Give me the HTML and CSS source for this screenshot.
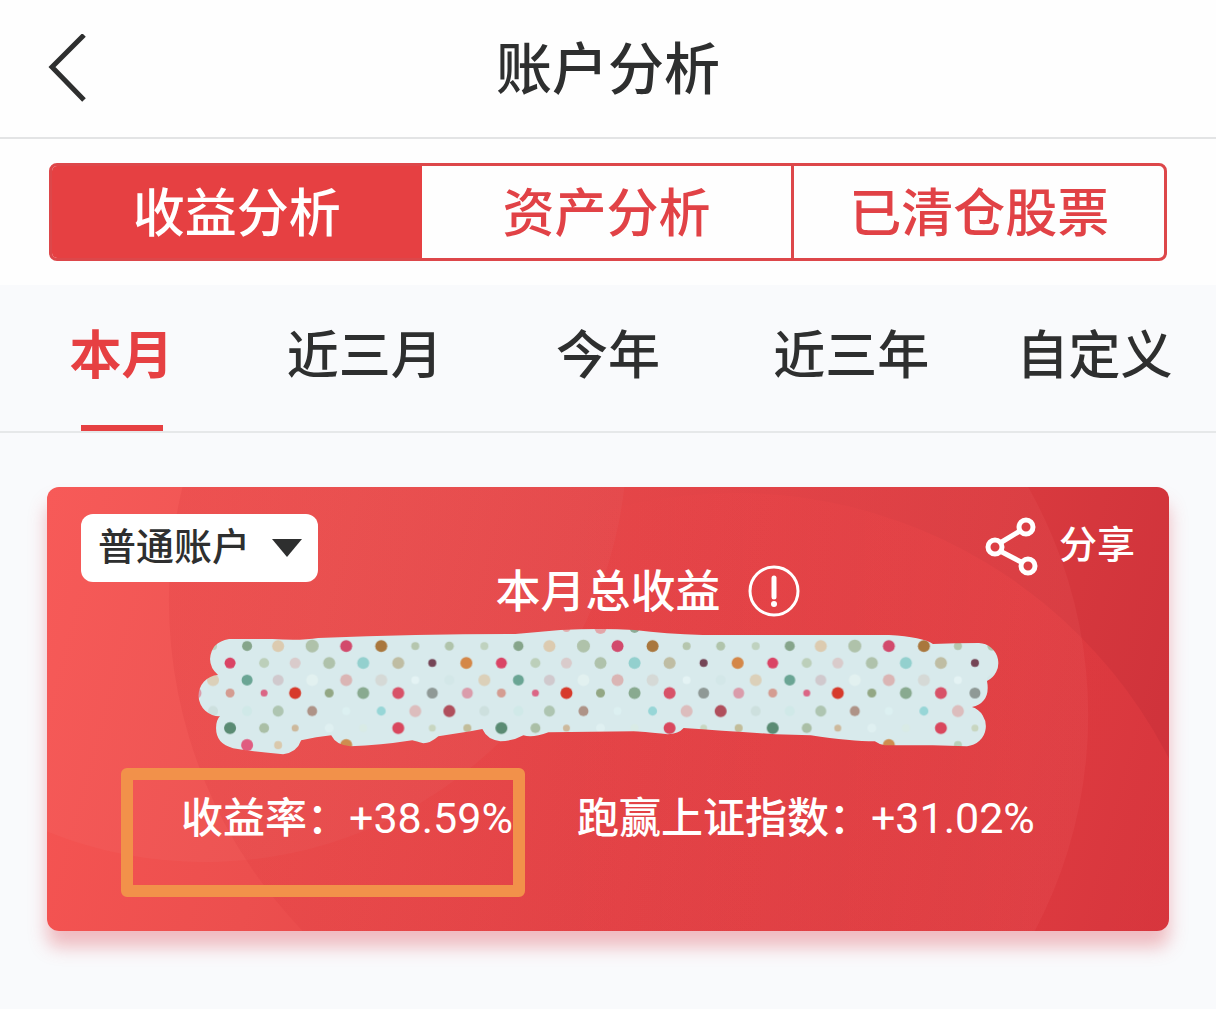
FILE: index.html
```html
<!DOCTYPE html>
<html lang="zh-CN">

<head>
  <meta charset="UTF-8">
  <meta name="viewport" content="width=device-width, initial-scale=1">
  <title>账户分析</title>
  <link rel="stylesheet" href="styles.css">
</head>

<body>

  <header class="top-bar">
    <button class="back-button" aria-label="返回">
      <svg width="40" height="70" viewBox="0 0 40 70"><path d="M36 1 L4 33 L36 66" /></svg>
    </button>
    <h1>账户分析</h1>
  </header>

  <div class="segment-wrap">
    <div class="segment">
      <button class="active">收益分析</button>
      <button>资产分析</button>
      <button>已清仓股票</button>
    </div>
  </div>

  <nav class="period-tabs">
    <button class="active">本月</button>
    <button>近三月</button>
    <button>今年</button>
    <button>近三年</button>
    <button>自定义</button>
  </nav>

  <main>
    <section class="card">
      <!-- soft circles behind the content -->
      <svg class="card-bg" viewBox="0 0 1122 444" preserveAspectRatio="xMidYMid slice">
        <defs>
          <linearGradient id="fade-dark">
            <stop offset="0" stop-color="#c81e28" stop-opacity="0.12" />
            <stop offset="0.5" stop-color="#c81e28" stop-opacity="0" />
          </linearGradient>
          <linearGradient id="fade-red">
            <stop offset="0.3" stop-color="#ff484a" stop-opacity="0" />
            <stop offset="0.8" stop-color="#ff484a" stop-opacity="0.2" />
          </linearGradient>
          <linearGradient id="fade-light">
            <stop offset="0.5" stop-color="#ff8080" stop-opacity="0" />
            <stop offset="1" stop-color="#ff8080" stop-opacity="0.1" />
          </linearGradient>
        </defs>
        <circle cx="158" cy="-47" r="422" fill="#fff" fill-opacity="0.03" />
        <circle cx="598" cy="113" r="476" fill="url(#fade-dark)" />
        <circle cx="688" cy="493" r="487" fill="url(#fade-red)" />
        <circle cx="578" cy="228" r="463" fill="url(#fade-light)" />
      </svg>

      <div class="card-head">
        <div class="account">
          <select aria-label="账户">
            <option>普通账户</option>
          </select>
          <svg class="arrow" width="30" height="18" viewBox="0 0 30 18"><path d="M0 0 H30 L15 18 Z" /></svg>
        </div>
        <button class="share">
          <svg width="54" height="60" viewBox="0 0 54 60">
            <path d="M15 26 L35 14 M15 34 L36 45" />
            <circle cx="41" cy="10" r="7" />
            <circle cx="10" cy="30" r="7" />
            <circle cx="43" cy="49" r="7" />
          </svg>
          分享
        </button>
      </div>

      <div class="card-title">
        <h2>本月总收益</h2>
        <button class="info" aria-label="说明">
          <svg width="52" height="52" viewBox="0 0 52 52">
            <circle cx="26" cy="26" r="24" />
            <path d="M26 13 V32" />
            <circle class="dot" cx="26" cy="39" r="3" />
          </svg>
        </button>
      </div>

      <!-- hidden amount -->
      <svg class="mask" viewBox="198 628 800 128">
        <defs>
          <pattern id="dots" x="205" y="620" width="271" height="140" patternUnits="userSpaceOnUse">
            <rect width="271" height="140" fill="#d8eaec" />
            <g transform="translate(-205 -620)">
              <circle cx="295" cy="628" r="4" fill="#e3abab" />
              <circle cx="329" cy="628" r="6" fill="#e3a5a8" />
              <circle cx="363" cy="628" r="5" fill="#8bab95" />

              <circle cx="213" cy="646" r="4" fill="#bfd2bf" />
              <circle cx="247" cy="646" r="5" fill="#86a58b" />
              <circle cx="278" cy="646" r="6" fill="#dccbb0" />
              <circle cx="312" cy="646" r="6.5" fill="#afc2aa" />
              <circle cx="346" cy="646" r="6" fill="#d24a6c" />
              <circle cx="381" cy="646" r="6" fill="#a9773d" />
              <circle cx="415" cy="646" r="4" fill="#b5c6ae" />
              <circle cx="449" cy="646" r="4.5" fill="#b0c4ab" />

              <circle cx="230" cy="663" r="5.5" fill="#da4465" />
              <circle cx="264" cy="663" r="5" fill="#bccfba" />
              <circle cx="295" cy="663" r="5.5" fill="#d9cbcb" />
              <circle cx="329" cy="663" r="6" fill="#afc2ab" />
              <circle cx="363" cy="663" r="6" fill="#93d0ce" />
              <circle cx="398" cy="663" r="6" fill="#bfbda3" />
              <circle cx="432" cy="663" r="4" fill="#754556" />
              <circle cx="466" cy="663" r="6" fill="#d48748" />

              <circle cx="213" cy="680" r="6" fill="#dbd0b9" />
              <circle cx="247" cy="680" r="5.5" fill="#6aa594" />
              <circle cx="278" cy="680" r="5.5" fill="#d0c9cd" />
              <circle cx="312" cy="680" r="6" fill="#e2f1f0" />
              <circle cx="346" cy="680" r="6" fill="#dab5b4" />
              <circle cx="381" cy="680" r="6" fill="#d5d9d6" />
              <circle cx="415" cy="680" r="4" fill="#e4f3f4" />
              <circle cx="449" cy="680" r="5" fill="#d3e7e8" />

              <circle cx="230" cy="693" r="4.5" fill="#d49c91" />
              <circle cx="264" cy="693" r="3.5" fill="#db6585" />
              <circle cx="295" cy="693" r="6" fill="#d73a2b" />
              <circle cx="329" cy="693" r="4.5" fill="#93a784" />
              <circle cx="363" cy="693" r="6" fill="#89aa90" />
              <circle cx="398" cy="693" r="6" fill="#d85268" />
              <circle cx="432" cy="693" r="5.5" fill="#8f9996" />
              <circle cx="467" cy="693" r="5.5" fill="#da9cab" />

              <circle cx="213" cy="711" r="5" fill="#cde0de" />
              <circle cx="247" cy="711" r="5" fill="#d0e9e8" />
              <circle cx="278" cy="711" r="5.5" fill="#aec5b1" />
              <circle cx="312" cy="711" r="5" fill="#ae9387" />
              <circle cx="346" cy="711" r="4" fill="#dcf0f1" />
              <circle cx="381" cy="711" r="4.5" fill="#97d6d7" />
              <circle cx="415" cy="711" r="6" fill="#dcbdbd" />
              <circle cx="449" cy="711" r="6" fill="#b04f5c" />

              <circle cx="230" cy="728" r="6" fill="#5a8b73" />
              <circle cx="264" cy="728" r="5" fill="#aabfa6" />
              <circle cx="295" cy="728" r="3.5" fill="#cdb99c" />
              <circle cx="329" cy="728" r="4.5" fill="#dff0f1" />
              <circle cx="363" cy="728" r="4" fill="#d9ebe6" />
              <circle cx="398" cy="728" r="6" fill="#d9475d" />
              <circle cx="432" cy="728" r="3.5" fill="#c8d6c0" />
              <circle cx="467" cy="728" r="4" fill="#c2bd9a" />

              <circle cx="247" cy="745" r="6" fill="#e05c80" />
              <circle cx="278" cy="745" r="4" fill="#dac9ac" />
              <circle cx="346" cy="745" r="6" fill="#ce8d50" />
              <circle cx="415" cy="745" r="4" fill="#b9cfb9" />
            </g>
          </pattern>
        </defs>
        <path fill="url(#dots)" d="M229 639 L272 639 Q300 641 318 638 Q420 634 515 634 L560 630 Q600 628 634 630 Q665 634 702 635 L888 635 Q922 637 932 644 Q955 643 978 643 A20 20 0 0 1 986 681 Q990 702 971 707 A20 20 0 0 1 966 746 L932 745 L884 745 Q878 744 874 741 Q850 741 810 735 L775 734 Q725 731 683 728 Q678 734 667 734 Q640 731 633 731 L548 732 Q532 738 523 735 Q512 741 500 741 Q487 740 482 729 L470 731 L438 736 Q430 743 423 743 L412 740 Q380 745 350 746 Q336 745 331 735 L316 737 L301 740 Q297 752 283 754 Q255 752 233 748 Q216 744 216 728 Q216 720 220 716 A20 20 0 0 1 218 675 Q210 668 210 659 Q211 642 229 639 Z" />
      </svg>

      <div class="stats">
        <div class="stat marked">收益率：<span>+38.59%</span></div>
        <div class="stat">跑赢上证指数：<span>+31.02%</span></div>
      </div>
    </section>
  </main>

</body>

</html>
```

FILE: styles.css
```css
* {
  box-sizing: border-box;
}

body {
  margin: 0;
  background-color: #f9fafc;
  color: #2e2f2f;
  font-family: "Noto Sans CJK SC", sans-serif;
  font-weight: 500;
}

button,
select {
  margin: 0;
  padding: 0;
  border: none;
  background: none;
  color: inherit;
  font: inherit;
}

h1,
h2 {
  margin: 0;
  font-weight: 500;
}

svg {
  display: block;
}

.top-bar {
  display: grid;
  grid-template-columns: 1fr auto 1fr;
  align-items: center;
  height: 139px;
  padding: 0 48px;
  background-color: #fefefe;
  border-bottom: 2px solid #e3e4e5;
}

.top-bar h1 {
  padding-bottom: 8px;
  font-size: 56px;
  line-height: 80px;
}

.back-button {
  justify-self: start;
}

.back-button path {
  fill: none;
  stroke: #2e2f2f;
  stroke-width: 5;
}

.segment-wrap {
  padding: 24px 49px;
  background-color: #fefefe;
}

.segment {
  display: flex;
  height: 98px;
  border: 3px solid #dd474a;
  border-radius: 8px;
  overflow: hidden;
}

.segment button {
  flex: 1;
  padding-bottom: 4px;
  color: #e14246;
  font-size: 52px;
  line-height: 76px;
}

.segment button + button + button {
  border-left: 3px solid #dd474a;
}

.segment button.active {
  background-color: #e64042;
  color: #fff;
}

.period-tabs {
  display: flex;
  height: 148px;
  border-bottom: 2px solid #e6e8e9;
}

.period-tabs button {
  flex: 1;
  display: flex;
  flex-direction: column;
  align-items: center;
  padding-top: 29px;
  font-size: 52px;
  line-height: 76px;
}

.period-tabs .active {
  color: #e64042;
  font-weight: 700;
}

.period-tabs .active::after {
  content: "";
  width: 82px;
  height: 6px;
  margin-top: auto;
  background-color: #e64042;
}

main {
  padding: 54px 47px;
}

.card {
  position: relative;
  padding: 27px 34px 34px;
  border-radius: 12px;
  background: linear-gradient(105deg, #f75553 0%, #ec4f4e 25%, #e24246 55%, #d8393e 80%, #cd313a 100%);
  box-shadow: 0 16px 18px rgba(220, 70, 80, 0.35);
  color: #fff;
}

.card-bg {
  position: absolute;
  top: 0;
  left: 0;
  width: 100%;
  height: 100%;
  border-radius: 12px;
}

.card-head,
.card-title,
.mask,
.stats {
  position: relative;
}

.card-head {
  display: flex;
  justify-content: space-between;
  align-items: flex-start;
  font-size: 38px;
  line-height: 56px;
}

.account {
  position: relative;
}

.account select {
  width: 237px;
  height: 68px;
  padding: 0 60px 8px 17px;
  border-radius: 12px;
  background-color: #fff;
  color: #2e2f2f;
  appearance: none;
}

.arrow {
  position: absolute;
  top: 25px;
  right: 16px;
  fill: #2e2f2f;
  pointer-events: none;
}

.share {
  display: flex;
  align-items: flex-start;
  gap: 20px;
}

.share svg,
.info svg {
  fill: none;
  stroke: #fff;
}

.share svg {
  margin-top: 3px;
  stroke-width: 5;
}

.card-title {
  display: grid;
  grid-template-columns: 1fr auto 1fr;
  align-items: center;
  gap: 27px;
  margin-top: -26px;
}

.card-title h2 {
  grid-column: 2;
  padding-bottom: 4px;
  font-size: 45px;
  line-height: 66px;
}

.info {
  justify-self: start;
}

.info svg {
  stroke-width: 3;
}

.info path {
  stroke-width: 5;
  stroke-linecap: round;
}

.info .dot {
  fill: #fff;
  stroke: none;
}

.mask {
  width: 76%;
  margin: 2px auto 12px 117px;
}

.stats {
  display: flex;
  gap: 52px;
  padding-left: 40px;
  font-size: 42px;
  line-height: 60px;
}

.stat {
  padding: 17px 0;
  white-space: nowrap;
}

.stat span {
  font-family: Roboto, sans-serif;
  font-size: 43px;
  font-weight: 400;
}

.stat.marked {
  padding: 5px 0 37px 48px;
  border: 12px solid #f2914a;
  border-radius: 6px;
}
```
